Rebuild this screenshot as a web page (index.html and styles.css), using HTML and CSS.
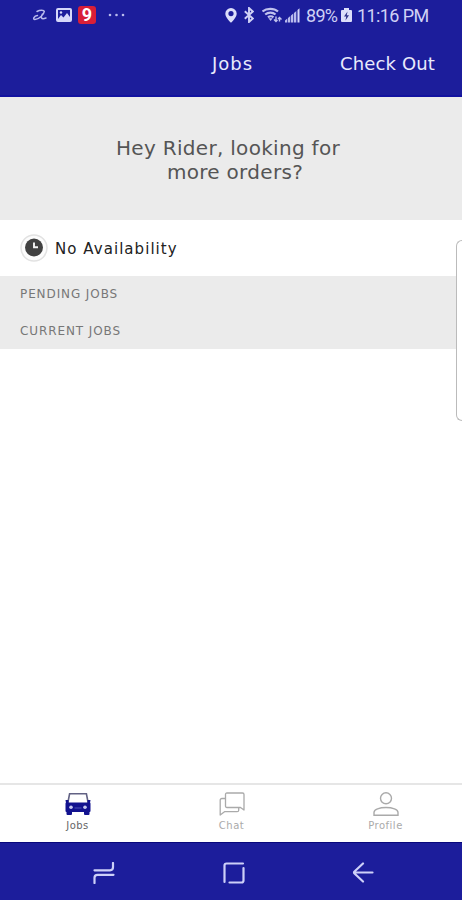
FILE: index.html
```
<!DOCTYPE html>
<html lang="en">
  <head>
    <meta charset="UTF-8" />
    <meta name="viewport" content="width=device-width, initial-scale=1.0" />
    <title>Jobs</title>
    <link rel="stylesheet" href="styles.css">
  </head>
  <body>
    <!-- Status Bar -->
    <div class="status-bar">
      <div class="status-left">
        <svg class="icon-swirl" width="16" height="12" viewBox="0 0 16 12" fill="none" stroke="#b9bbed" stroke-width="1.500" stroke-linecap="round">
          <path d="M5 2.500C8 .8 12 1 12.300 2.500C12 5 7 10.500 3 10.500C.3 10.300 2 7 5.500 6.500M10.500 5C8.500 8 8.500 11 14 9" />
        </svg>
        <svg class="icon-image" width="16" height="14" viewBox="0 0 16 14">
          <rect x="1" y="1" width="14" height="12" rx="1" fill="#1c1d9b" stroke="#d5d7fa" stroke-width="2" />
          <circle cx="5" cy="4.500" r="1.200" fill="#d5d7fa" />
          <path d="M2 11l3-4 2.500 2.500L11 5l3 4v3H2z" fill="#d5d7fa" />
        </svg>
        <span class="badge-nine">9</span>
        <svg class="icon-dots" width="17" height="4" viewBox="0 0 17 4" fill="#b9bbed">
          <circle cx="2" cy="2" r="1.300" />
          <circle cx="8.500" cy="2" r="1.300" />
          <circle cx="15" cy="2" r="1.300" />
        </svg>
      </div>
      <div class="status-right">
        <svg class="icon-pin" width="12" height="15" viewBox="0 0 12 15">
          <path d="M6 0a5.700 5.700 0 0 0-5.700 5.700C.3 9.500 6 14.700 6 14.700s5.700-5.200 5.700-9A5.700 5.700 0 0 0 6 0zm0 3a2.600 2.600 0 1 1 0 5.200A2.600 2.600 0 0 1 6 3z" fill="#dcdefa" />
        </svg>
        <svg class="icon-bluetooth" width="10" height="16" viewBox="0 0 10 16" fill="none" stroke="#cfd1f5" stroke-width="1.900">
          <path d="M.8 4.200l8 7.300L5 15V1l3.800 3.500-8 7.300" />
        </svg>
        <svg class="icon-wifi" width="21" height="16" viewBox="0 0 21 16" fill="none" stroke="#c0c2ee" stroke-width="2.200">
          <path d="M.5 4.500C4.500.9 12 .9 16 4.500" />
          <path d="M3.200 7.500c3-2.600 7.500-2.600 10.300 0" />
          <path d="M6 10.300c1.500-1.300 4-1.300 5.500 0" />
          <path d="M6.500 11.300h4.200L8.600 14z" fill="#c0c2ee" stroke="none" />
          <path d="M14 9.500v5M12 12.500l2 2 1.500-1.500M17.500 14.500v-4M16 12l1.500-1.500 2 2" stroke-width="1.400" />
        </svg>
        <svg class="icon-signal" width="15" height="15" viewBox="0 0 15 15" fill="#b9bbed">
          <path d="M0 14.500v-2l2.300-2v4zM3 14.500V10l2.300-1.900v6.400zM6 14.500V7.500l2.300-1.900v8.900zM9 14.500V5l2.300-1.900v11.400z" />
          <path d="M12.500 14.500V2l2-1.700v14.200z" fill="#d5d7fa" />
        </svg>
        <span class="battery-text">89%</span>
        <svg class="icon-battery" width="11" height="14" viewBox="0 0 11 14">
          <path d="M3 0h5v2h2a1 1 0 0 1 1 1v10a1 1 0 0 1-1 1H1a1 1 0 0 1-1-1V3a1 1 0 0 1 1-1h2z" fill="#dcdefa" />
          <path d="M6.500 3.500L3 8.500h2.200l-.7 4L8 7.300H5.800z" fill="#30338a" />
        </svg>
        <span class="time-text">11:16 PM</span>
      </div>
    </div>

    <!-- Header -->
    <header class="header">
      <h1 class="header-title">Jobs</h1>
      <a class="check-out">Check Out</a>
    </header>

    <!-- Main Content -->
    <main class="content">
      <section class="banner">
        <p class="banner-line">Hey Rider, looking for</p>
        <p class="banner-line banner-second">more orders?</p>
      </section>

      <div class="availability">
        <svg width="28" height="28" viewBox="0 0 28 28">
          <circle cx="14" cy="14" r="13" fill="#fcfcfc" stroke="#e2e2e2" stroke-width="1.500" />
          <circle cx="14" cy="13.500" r="9" fill="#414141" />
          <path d="M14 8.500v4.800h4" fill="none" stroke="#f4f4f4" stroke-width="1.900" />
        </svg>
        <span class="availability-text">No Availability</span>
      </div>

      <div class="sections">
        <h2 class="section-title">PENDING JOBS</h2>
        <h2 class="section-title">CURRENT JOBS</h2>
      </div>

      <div class="edge-panel"></div>
    </main>

    <!-- Tabs -->
    <nav class="tabs">
      <a class="tab active">
        <svg width="26" height="24" viewBox="0 0 26 24">
          <path d="M2.800 11L4.600 1.800h16.800l1.800 9.200" fill="#fff" stroke="#626284" stroke-width="1.600" />
          <path d="M1.500 10.500h23q1 0 1 1V19q0 1-1 1V22q0 1-1 1h-3.500q-1 0-1-1v-2h-12V22q0 1-1 1H2.500q-1 0-1-1v-2q-1 0-1-1v-7.500q0-1 1-1z" fill="#12128f" />
          <path d="M.5 8h3v3H1zM25.500 8h-3v3H25z" fill="#12128f" />
          <circle cx="6" cy="15.300" r="1.800" fill="#c5c7f0" />
          <circle cx="20" cy="15.300" r="1.800" fill="#c5c7f0" />
          <path d="M9.500 16h7" stroke="#4f50b8" />
        </svg>
        <span class="tab-label">Jobs</span>
      </a>
      <a class="tab">
        <svg width="26" height="24" viewBox="0 0 26 24" fill="none" stroke="#aaa" stroke-width="1.300" stroke-linejoin="round">
          <path d="M8 1h15.500q1.500 0 1.500 1.500V18l-3.500-2.500H8q-1.500 0-1.500-1.500V2.500Q6.500 1 8 1z" />
          <path d="M6.500 6.500H3Q1.200 6.500 1.200 8v15l4.300-3.300h12.700q1.500 0 1.500-1.500v-2.700" />
        </svg>
        <span class="tab-label">Chat</span>
      </a>
      <a class="tab">
        <svg width="26" height="24" viewBox="0 0 26 24" fill="none" stroke="#aaa" stroke-width="1.400">
          <circle cx="13" cy="6.300" r="5.500" />
          <path d="M1 23.200v-2.700C1 17.500 6.500 15.500 13 15.500s12 2 12 5v2.700z" />
        </svg>
        <span class="tab-label">Profile</span>
      </a>
    </nav>

    <!-- System Navigation -->
    <div class="system-nav">
      <svg width="22" height="22" viewBox="0 0 22 22">
        <path d="M1.500 8.300h15.500q3 0 3-3V1M20.500 12.800H4.500q-3 0-3 3V21" />
      </svg>
      <svg width="22" height="22" viewBox="0 0 22 22">
        <path d="M1.500 20V3.500q0-2 2-2H20M20.500 6v12.500q0 2-2 2H6.500" />
      </svg>
      <svg width="22" height="22" viewBox="0 0 22 22">
        <path d="M11 1.500L2.500 9.500q-1 1 0 2l8.500 8M2.500 10.500H20.500" />
      </svg>
    </div>
  </body>
</html>
```

FILE: styles.css
```
/* Global Styles */
* {
  box-sizing: border-box;
}

body {
  display: flex;
  flex-direction: column;
  height: 900px;
  margin: 0;
  background: white;
  font-family: Verdana, "DejaVu Sans", sans-serif;
  overflow: hidden;
}

svg {
  display: block;
  flex-shrink: 0;
}

h1, h2, p {
  margin: 0;
  font-weight: normal;
}

/* Status Bar */
.status-bar {
  display: flex;
  justify-content: space-between;
  height: 30px;
  padding: 0 33px 0 32px;
  background-color: #1c1d9b;
  color: #cfd1f5;
  font-family: Roboto, sans-serif;
}

.status-left,
.status-right {
  display: flex;
  align-items: center;
}

.icon-image {
  margin-left: 8px;
}

.badge-nine {
  width: 18px;
  height: 18px;
  margin-left: 6px;
  border-radius: 3px;
  background-color: #d81f38;
  color: white;
  font-size: 18px;
  font-weight: bold;
  line-height: 18px;
  text-align: center;
}

.icon-dots {
  margin-left: 12px;
}

.icon-bluetooth {
  margin-left: 7px;
}

.icon-wifi {
  margin-left: 8px;
}

.icon-signal {
  margin-left: 2px;
}

.battery-text,
.time-text {
  font-size: 18px;
  line-height: 30px;
  padding-top: 1px;
  white-space: nowrap;
}

.battery-text {
  width: 31px;
  margin-left: 6px;
  letter-spacing: -0.7px;
}

.icon-battery {
  margin-left: 4px;
}

.time-text {
  width: 72px;
  margin-left: 5px;
  letter-spacing: -0.6px;
}

/* Header */
.header {
  display: grid;
  grid-template-columns: 1fr 42px 1fr;
  align-items: center;
  height: 67px;
  padding-top: 2px;
  border-bottom: 2px solid #1212a0;
  background-color: #1c1d9b;
  color: #e9eafc;
}

.header-title {
  grid-column: 2;
  padding-left: 2px;
  font-size: 18px;
  letter-spacing: 1px;
}

.check-out {
  padding-right: 27px;
  font-size: 18px;
  letter-spacing: 0.15px;
  text-align: right;
}

/* Main Content */
.content {
  position: relative;
  flex: 1;
}

.banner {
  height: 123px;
  padding: 39px 6px 0 0;
  background-color: #ebebeb;
  color: #555;
  font-size: 20px;
  letter-spacing: 0.3px;
  line-height: 24px;
  text-align: center;
}

.banner-second {
  padding-left: 14px;
}

.availability {
  display: flex;
  align-items: center;
  height: 56px;
  padding-left: 20px;
}

.availability-text {
  margin-left: 7px;
  padding-top: 2px;
  color: #222;
  font-size: 15px;
  letter-spacing: 1.05px;
}

.sections {
  height: 73px;
  padding-left: 20px;
  background-color: #ebebeb;
}

.section-title {
  height: 36.5px;
  color: #777;
  font-size: 12px;
  letter-spacing: 0.9px;
  line-height: 36px;
}

.edge-panel {
  position: absolute;
  top: 143px;
  right: 0;
  width: 6px;
  height: 181px;
  border: 1px solid #bbb;
  border-right: none;
  border-radius: 7px 0 0 7px;
  background-color: white;
}

/* Tabs */
.tabs {
  display: grid;
  grid-template-columns: repeat(3, 1fr);
  height: 59px;
  border-top: 2px solid #e6e6e6;
}

.tab {
  display: flex;
  flex-direction: column;
  align-items: center;
  padding: 7px 0 0 1px;
  color: #aaa;
}

.tab-label {
  margin-top: 2px;
  font-size: 10px;
  letter-spacing: 0.5px;
  line-height: 15px;
}

.active .tab-label {
  color: #666;
}

/* System Navigation */
.system-nav {
  display: flex;
  justify-content: space-between;
  height: 58px;
  padding: 19px 88px 0 93px;
  border-top: 1px solid #08087c;
  background-color: #1c1d9b;
}

.system-nav svg {
  fill: none;
  stroke: #cdd0f8;
  stroke-width: 2.2;
  stroke-linecap: round;
}
```
